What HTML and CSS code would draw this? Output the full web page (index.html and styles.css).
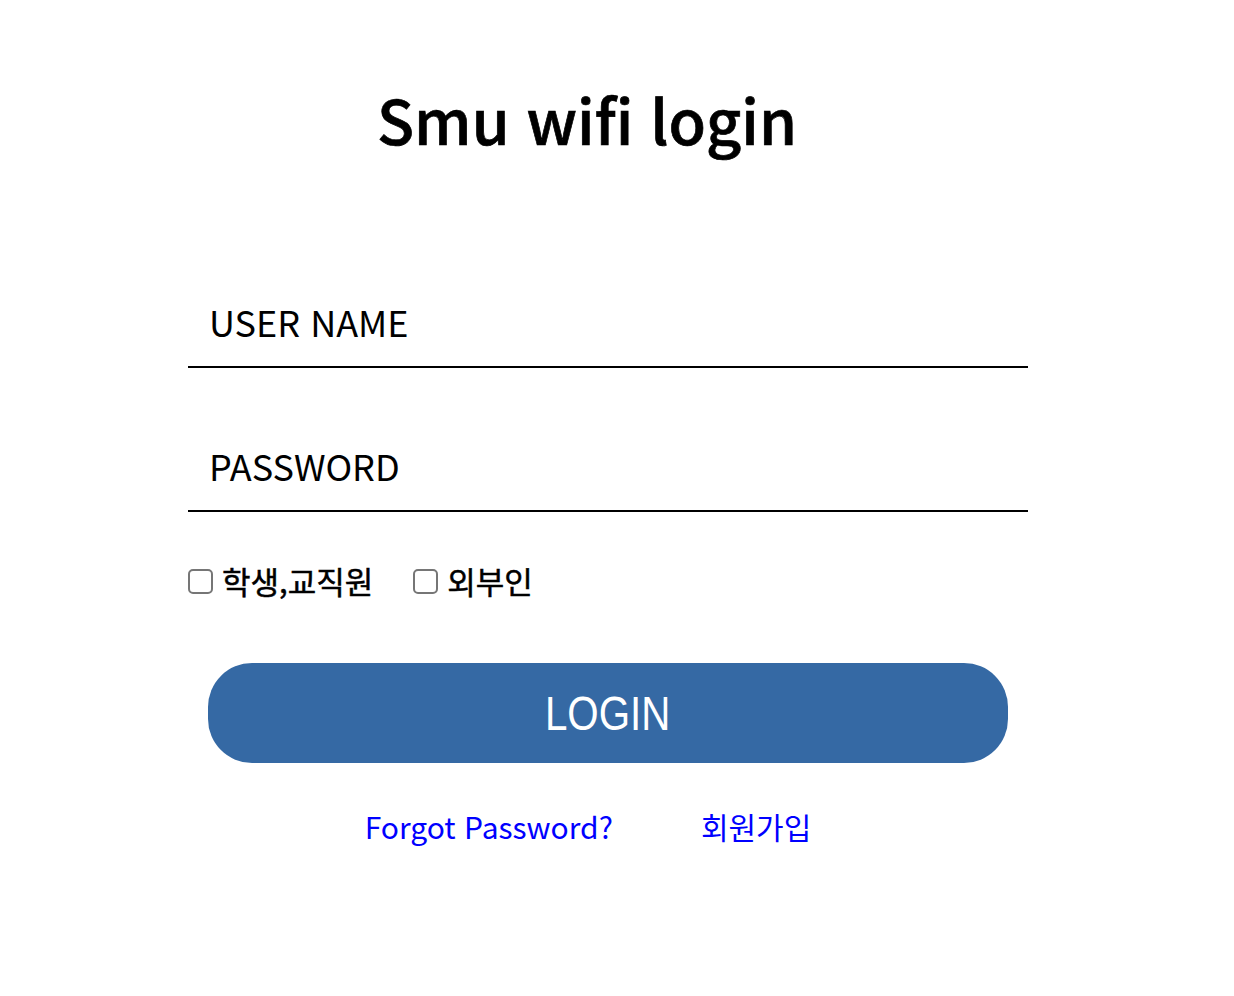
FILE: index.html
```html
<!DOCTYPE html>
<html lang="ko">
<head>
<meta charset="utf-8">
<title>Smu wifi login</title>
<link rel="stylesheet" href="styles.css">
</head>
<body>
<main class="wrap">
  <h1 class="title">Smu wifi login</h1>
  <form class="form">
    <input class="field" type="text" placeholder="USER NAME">
    <input class="field" type="password" placeholder="PASSWORD">
    <div class="checks">
      <label class="check"><input type="checkbox"><span>학생,교직원</span></label>
      <label class="check"><input type="checkbox"><span>외부인</span></label>
    </div>
    <button class="btn" type="button"><span class="btn-text">LOGIN</span></button>
    <div class="links">
      <a href="#">Forgot Password?</a>
      <a href="#">회원가입</a>
    </div>
  </form>
</main>
</body>
</html>
```

FILE: styles.css
```css
html, body {
  margin: 0;
  padding: 0;
  background: #fff;
}
body {
  font-family: "Noto Sans CJK KR", "Noto Sans", sans-serif;
  color: #000;
}
.wrap {
  width: 840px;
  margin-left: 188px;
  padding-top: 66px;
}
.title {
  margin: 0;
  font-size: 61px;
  font-weight: 500;
  line-height: 106px;
  text-align: center;
  padding-right: 42px;
  -webkit-text-stroke: 0.7px #000;
}
.form {
  display: flex;
  flex-direction: column;
  margin-top: 104px;
}
.field {
  display: block;
  box-sizing: border-box;
  width: 840px;
  height: 92px;
  border: none;
  border-bottom: 2px solid #000;
  outline: none;
  padding: 0 0 0 21px;
  font-family: "Noto Sans CJK KR", "Noto Sans", sans-serif;
  font-size: 36px;
  background: transparent;
}
.field + .field {
  margin-top: 52px;
}
.field::placeholder {
  color: #000;
}
.checks {
  display: flex;
  gap: 40px;
  margin-top: 44px;
}
.check {
  display: flex;
  align-items: center;
  font-size: 31px;
  font-weight: 400;
  line-height: 50px;
  -webkit-text-stroke: 0.5px #000;
}
.check input {
  appearance: none;
  -webkit-appearance: none;
  box-sizing: border-box;
  width: 25px;
  height: 25px;
  margin: 0 9px 0 0;
  border: 2px solid #767676;
  border-radius: 5px;
  background: #fff;
}
.btn {
  align-self: center;
  width: 800px;
  height: 100px;
  margin-top: 57px;
  border: none;
  border-radius: 44px;
  background: #3569a4;
  color: #fff;
  font-family: "Liberation Sans", Arial, sans-serif;
  font-size: 48px;
  cursor: pointer;
}
.btn-text {
  display: inline-block;
  transform: scaleX(0.84);
}
.links {
  display: flex;
  justify-content: center;
  gap: 88px;
  margin-top: 38px;
  padding-right: 40px;
}
.links a {
  color: #0000ff;
  text-decoration: none;
  font-size: 30px;
  line-height: 50px;
}
```
